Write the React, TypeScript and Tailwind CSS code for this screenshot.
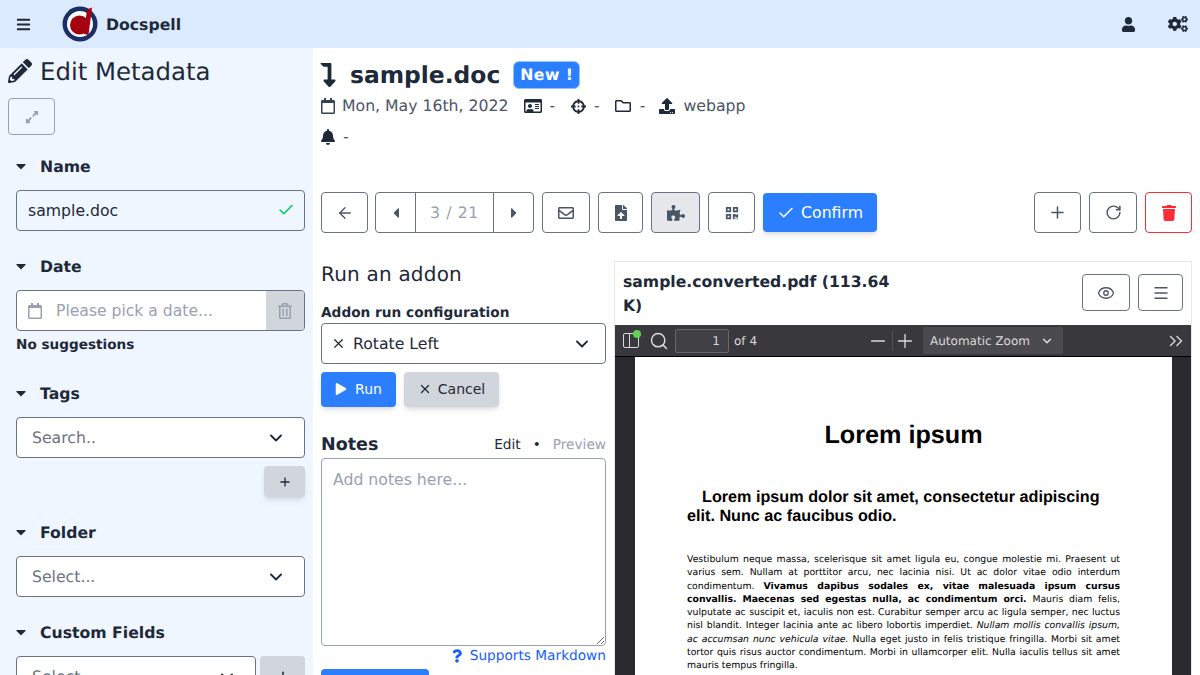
import type { ReactNode } from 'react';
import {
  FaBars, FaBell, FaCaretDown, FaCaretLeft, FaCaretRight, FaCogs, FaCrosshairs, FaExpandAlt,
  FaFileUpload, FaLevelDownAlt, FaPencilAlt, FaPlay, FaPuzzlePiece, FaQrcode, FaQuestion,
  FaRegCalendar, FaRegEnvelope, FaRegFolder, FaRegIdCard, FaRegTrashAlt,
  FaTrash, FaUpload, FaUser,
} from 'react-icons/fa';
import { ArrowLeft, Check, ChevronDown, ChevronsRight, Eye, Menu, Minus, Plus, RotateCw, Search, X } from 'lucide-react';

function Logo() {
  return (
    <svg viewBox="0 0 36 36" className="w-9 h-9">
      <circle cx="18" cy="18" r="17.5" fill="#1b2f66" />
      <circle cx="18" cy="18" r="13" fill="#ffffff" />
      <circle cx="17.5" cy="19" r="9.5" fill="#a50010" />
      <path d="M25 3.5 L30 1.5 L26.5 29 L22 28 Z" fill="#a50010" />
    </svg>
  );
}

function SideLabel({ children }: { children: ReactNode }) {
  return (
    <div className="flex items-center h-6 pl-4 pt-[2px] mb-3 font-bold text-[15.7px] text-gray-800">
      <FaCaretDown className="w-[10px] h-4 mr-[14px] -mt-[2px]" />
      <span>{children}</span>
    </div>
  );
}

function SelectBox({ label, className }: { label: string; className?: string }) {
  return (
    <div className={`h-[41px] bg-white border border-gray-500 rounded flex items-center justify-between pl-[15px] pr-5 text-gray-500 ${className ?? ''}`}>
      <span>{label}</span>
      <ChevronDown className="w-5 h-5 text-gray-800 -mr-[2px]" strokeWidth={2.2} />
    </div>
  );
}

function Sidebar() {
  return (
    <aside className="w-[313px] shrink-0 bg-blue-50 h-[627px] overflow-hidden">
      <div className="flex items-center h-8 mt-[7px] pl-2 pt-[2px] text-[24.4px] text-gray-800">
        <FaPencilAlt className="w-6 h-6 mr-2 -mt-[2px]" />
        <span>Edit Metadata</span>
      </div>
      <button className="ml-2 mt-[11px] w-[47px] h-[37px] border border-gray-400 rounded flex items-center justify-center text-gray-400">
        <FaExpandAlt className="w-[14px] h-[14px]" />
      </button>

      <div className="mt-[19px]">
        <SideLabel>Name</SideLabel>
        <div className="relative mx-4 w-[289px]">
          <input
            readOnly
            value="sample.doc"
            className="w-full h-[41px] bg-blue-50 border border-gray-500 rounded pl-[11px] pr-10 text-[15.7px] text-gray-800 outline-none"
          />
          <Check className="absolute right-[10px] top-[11px] w-[18px] h-[18px] text-green-500" strokeWidth={2} />
        </div>
      </div>

      <div className="mt-[23px]">
        <SideLabel>Date</SideLabel>
        <div className="mx-4 w-[289px] h-[41px] bg-white border border-gray-500 rounded flex items-center overflow-hidden">
          <FaRegCalendar className="w-[14px] h-4 ml-[11px] text-gray-400 shrink-0" />
          <input
            placeholder="Please pick a date..."
            className="flex-1 min-w-0 ml-[14px] pt-[2px] bg-transparent text-[15.6px] outline-none placeholder:text-gray-400"
          />
          <div className="w-[38px] h-full bg-gray-300 flex items-center justify-center shrink-0">
            <FaRegTrashAlt className="w-[14px] h-4 text-gray-400" />
          </div>
        </div>
        <div className="ml-4 mt-[3px] h-5 leading-[22px] text-[13.6px] font-bold text-gray-800">No suggestions</div>
      </div>

      <div className="mt-[27px]">
        <SideLabel>Tags</SideLabel>
        <SelectBox label="Search.." className="mx-4 w-[289px]" />
        <div className="flex justify-end pr-2 mt-2">
          <button className="w-[41px] h-[31px] bg-gray-300 rounded shadow-md flex items-center justify-center text-gray-800">
            <Plus className="w-[14px] h-[14px]" strokeWidth={2.2} />
          </button>
        </div>
      </div>

      <div className="mt-[23px]">
        <SideLabel>Folder</SideLabel>
        <SelectBox label="Select..." className="mx-4 w-[289px]" />
      </div>

      <div className="mt-[23px]">
        <SideLabel>Custom Fields</SideLabel>
        <div className="flex mx-4 w-[289px] gap-1">
          <SelectBox label="Select..." className="w-[240px]" />
          <button className="w-[45px] h-[41px] bg-gray-300 rounded flex items-center justify-center text-gray-800">
            <Plus className="w-4 h-4" strokeWidth={2.2} />
          </button>
        </div>
      </div>
    </aside>
  );
}

function ToolButton({ className, children }: { className?: string; children: ReactNode }) {
  return (
    <button className={`h-[41px] border border-gray-500 rounded flex items-center justify-center text-gray-600 ${className ?? ''}`}>
      {children}
    </button>
  );
}

function Toolbar() {
  return (
    <div className="flex items-center mt-[43px]">
      <ToolButton className="w-[47px]"><ArrowLeft className="w-[18px] h-[18px]" strokeWidth={1.8} /></ToolButton>
      <div className="flex ml-[7px] w-[159px] h-[41px] border border-gray-500 rounded text-gray-600">
        <div className="w-[40px] flex items-center justify-center border-r border-gray-500"><FaCaretLeft className="w-3 h-4" /></div>
        <div className="flex-1 flex items-center justify-center text-gray-400 tracking-[0.6px]">3 / 21</div>
        <div className="w-[40px] flex items-center justify-center border-l border-gray-500"><FaCaretRight className="w-3 h-4" /></div>
      </div>
      <ToolButton className="w-[48px] ml-2"><FaRegEnvelope className="w-4 h-4" /></ToolButton>
      <ToolButton className="w-[45px] ml-2"><FaFileUpload className="w-3 h-4" /></ToolButton>
      <ToolButton className="w-[49px] ml-2 bg-gray-200"><FaPuzzlePiece className="w-[18px] h-[18px]" /></ToolButton>
      <ToolButton className="w-[47px] ml-2"><FaQrcode className="w-[14px] h-[14px]" /></ToolButton>
      <button className="ml-2 w-[114px] h-[39px] bg-blue-500 rounded shadow-md text-white flex items-center justify-center">
        <Check className="w-[18px] h-[18px] mr-[6px]" strokeWidth={2} />
        <span>Confirm</span>
      </button>
      <ToolButton className="w-[47px] ml-auto"><Plus className="w-[19px] h-[19px]" strokeWidth={1.9} /></ToolButton>
      <ToolButton className="w-[48px] ml-2"><RotateCw className="w-[17px] h-[17px]" strokeWidth={2.1} /></ToolButton>
      <button className="w-[47px] h-[41px] ml-2 border border-red-500 rounded flex items-center justify-center text-red-500">
        <FaTrash className="w-[14px] h-4" />
      </button>
    </div>
  );
}

function AddonColumn() {
  return (
    <div className="w-[285px] shrink-0">
      <div className="h-7 leading-[26px] text-xl text-gray-800 tracking-[0.2px]">Run an addon</div>
      <div className="mt-[14px] h-5 leading-5 text-[13.7px] font-bold text-gray-800">Addon run configuration</div>
      <div className="h-[41px] border border-gray-500 rounded flex items-center justify-between pl-[9px] pr-[13px] text-gray-800">
        <div className="flex items-center">
          <X className="w-[15px] h-[15px] mr-[7px]" strokeWidth={1.9} />
          <span>Rotate Left</span>
        </div>
        <ChevronDown className="w-5 h-5" strokeWidth={2.2} />
      </div>
      <div className="flex mt-2 gap-2 text-sm">
        <button className="w-[75px] h-[35px] pb-[2px] bg-blue-500 rounded shadow-md text-white flex items-center justify-center">
          <FaPlay className="w-3 h-3 mr-2" />
          <span>Run</span>
        </button>
        <button className="w-[95px] h-[35px] pb-[2px] bg-gray-300 rounded shadow-md text-gray-800 flex items-center justify-center">
          <X className="w-[14px] h-[14px] mr-[6px]" strokeWidth={2.2} />
          <span>Cancel</span>
        </button>
      </div>
      <div className="mt-[23px] h-7 pt-[2px] flex items-center justify-between">
        <span className="text-[17.5px] font-bold text-gray-800">Notes</span>
        <div className="flex items-center text-[13.7px]">
          <span className="text-gray-800">Edit</span>
          <span className="mx-[12px] text-gray-800">•</span>
          <span className="text-gray-400">Preview</span>
        </div>
      </div>
      <textarea
        placeholder="Add notes here..."
        className="block w-full h-[188px] border border-gray-400 rounded px-[11px] pt-[9px] pb-2 text-[15.7px] outline-none placeholder:text-gray-400"
      />
      <div className="flex justify-end items-center h-5 text-[13.7px] text-blue-600">
        <FaQuestion className="w-[10px] h-[14px] mr-2" />
        <span>Supports Markdown</span>
      </div>
      <button className="mt-[3px] block w-[108px] h-9 bg-blue-500 rounded" />
    </div>
  );
}

function PdfToolbar() {
  return (
    <div className="h-[32px] bg-[#38383d] border-b border-black text-[#d9d9db] flex items-center text-xs">
      <div className="relative ml-2 w-4 h-[15px] border border-[#d9d9db] rounded-[2px] flex">
        <div className="w-[6px] h-full border-r border-[#d9d9db]" />
        <span className="absolute -right-[3px] -top-[4px] w-2 h-2 rounded-full bg-[#5fd34f]" />
      </div>
      <Search className="ml-[10px] w-5 h-5" strokeWidth={1.8} />
      <div className="ml-[6px] w-[54px] h-6 border border-[#67676b] rounded-[2px] bg-[#404045] flex items-center justify-end pr-2">1</div>
      <span className="ml-[5px]">of 4</span>
      <Minus className="ml-[110px] w-[22px] h-[22px]" strokeWidth={1.5} />
      <div className="ml-[3px] w-px h-5 bg-[#4f4f54]" />
      <Plus className="ml-px w-[22px] h-[22px]" strokeWidth={1.5} />
      <div className="ml-[7px] w-[140px] h-[27px] bg-[#4a4a4f] rounded-[2px] flex items-center justify-between pl-[7px] pr-2">
        <span>Automatic Zoom</span>
        <ChevronDown className="w-[14px] h-[14px] mr-[1px]" strokeWidth={2.6} />
      </div>
      <ChevronsRight className="ml-auto mr-1 w-[22px] h-[22px]" strokeWidth={1.5} />
    </div>
  );
}

const lineClass = 'text-justify [text-align-last:justify] whitespace-nowrap';

function PdfPage() {
  return (
    <div className="ml-[20px] w-[537px] h-[400px] bg-white text-black overflow-hidden px-[52px] pt-[63px]">
      <div className="font-['Liberation_Sans',sans-serif] font-bold text-[25.2px] leading-[30px] text-center">Lorem ipsum</div>
      <div className="font-['Liberation_Sans',sans-serif] font-bold text-[16.2px] leading-[19px] mt-[38px] whitespace-nowrap">
        <div className="pl-[15px]">Lorem ipsum dolor sit amet, consectetur adipiscing</div>
        <div>elit. Nunc ac faucibus odio.</div>
      </div>
      <div className="mt-[27px] text-[9.3px] leading-[13.25px]">
        <div className={lineClass}>Vestibulum neque massa, scelerisque sit amet ligula eu, congue molestie mi. Praesent ut</div>
        <div className={lineClass}>varius sem. Nullam at porttitor arcu, nec lacinia nisi. Ut ac dolor vitae odio interdum</div>
        <div className={lineClass}>condimentum. <b>Vivamus dapibus sodales ex, vitae malesuada ipsum cursus</b></div>
        <div className={lineClass}><b>convallis. Maecenas sed egestas nulla, ac condimentum orci.</b> Mauris diam felis,</div>
        <div className={lineClass}>vulputate ac suscipit et, iaculis non est. Curabitur semper arcu ac ligula semper, nec luctus</div>
        <div className={lineClass}>nisl blandit. Integer lacinia ante ac libero lobortis imperdiet. <i>Nullam mollis convallis ipsum,</i></div>
        <div className={lineClass}><i>ac accumsan nunc vehicula vitae.</i> Nulla eget justo in felis tristique fringilla. Morbi sit amet</div>
        <div className={lineClass}>tortor quis risus auctor condimentum. Morbi in ullamcorper elit. Nulla iaculis tellus sit amet</div>
        <div>mauris tempus fringilla.</div>
      </div>
    </div>
  );
}

function PdfPanel() {
  return (
    <div className="flex-1 min-w-0 border-t border-x border-gray-200 h-[414px] overflow-hidden">
      <div className="h-[63px] flex justify-between pl-2 pr-2 pt-3">
        <div className="w-[280px] font-bold text-[15.65px] leading-6 text-gray-800 -mt-[4px]">sample.converted.pdf (113.64 K)</div>
        <div className="flex gap-2">
          <button className="w-[48px] h-[37px] border border-gray-500 rounded flex items-center justify-center text-gray-600">
            <Eye className="w-[18px] h-[18px]" strokeWidth={1.7} />
          </button>
          <button className="w-[45px] h-[37px] border border-gray-500 rounded flex items-center justify-center text-gray-600">
            <Menu className="w-[18px] h-[18px]" strokeWidth={1.8} />
          </button>
        </div>
      </div>
      <PdfToolbar />
      <div className="bg-[#2a2a2e] h-[400px]">
        <PdfPage />
      </div>
    </div>
  );
}

export default function App() {
  return (
    <div className="w-[1200px] h-[675px] overflow-hidden bg-white font-['DejaVu_Sans',sans-serif] text-[15.7px] text-gray-800 [text-rendering:geometricPrecision]">
      <header className="h-12 bg-blue-100 flex items-center">
        <FaBars className="ml-4 w-[15px] h-[15px]" />
        <div className="ml-[31px]"><Logo /></div>
        <span className="ml-2 mt-[2px] font-bold text-[15.7px]">Docspell</span>
        <FaUser className="ml-auto w-[15px] h-[15px]" />
        <FaCogs className="ml-[32px] mr-[12px] w-5 h-4" />
      </header>
      <div className="flex">
        <Sidebar />
        <main className="flex-1 min-w-0 px-2 pt-[11px]">
          <div className="flex items-center h-8">
            <FaLevelDownAlt className="w-4 h-6 shrink-0 -ml-px" />
            <span className="ml-[14px] mt-[2px] text-[23.4px] font-bold">sample.doc</span>
            <span className="ml-[13px] h-7 w-[67px] bg-blue-500 border border-blue-300 rounded-md text-white font-bold flex items-center justify-center tracking-[0.4px]">New !</span>
          </div>
          <div className="flex items-center h-6 mt-[3px] text-gray-600">
            <FaRegCalendar className="w-[14px] h-4 text-gray-700" />
            <span className="ml-[7px]">Mon, May 16th, 2022</span>
            <FaRegIdCard className="ml-4 w-[18px] h-4 text-gray-800" />
            <span className="ml-[7px]">-</span>
            <FaCrosshairs className="ml-4 w-[15px] h-[15px] text-gray-800" />
            <span className="ml-2">-</span>
            <FaRegFolder className="ml-[15px] w-4 h-4 text-gray-800" />
            <span className="ml-[9px]">-</span>
            <FaUpload className="ml-[14px] w-4 h-4 text-gray-800" />
            <span className="ml-2">webapp</span>
          </div>
          <div className="flex items-center h-6 mt-[7px] text-gray-600">
            <FaBell className="w-[14px] h-4 text-gray-800" />
            <span className="ml-2">-</span>
          </div>
          <Toolbar />
          <div className="flex gap-2 mt-[28px]">
            <AddonColumn />
            <PdfPanel />
          </div>
        </main>
      </div>
    </div>
  );
}
